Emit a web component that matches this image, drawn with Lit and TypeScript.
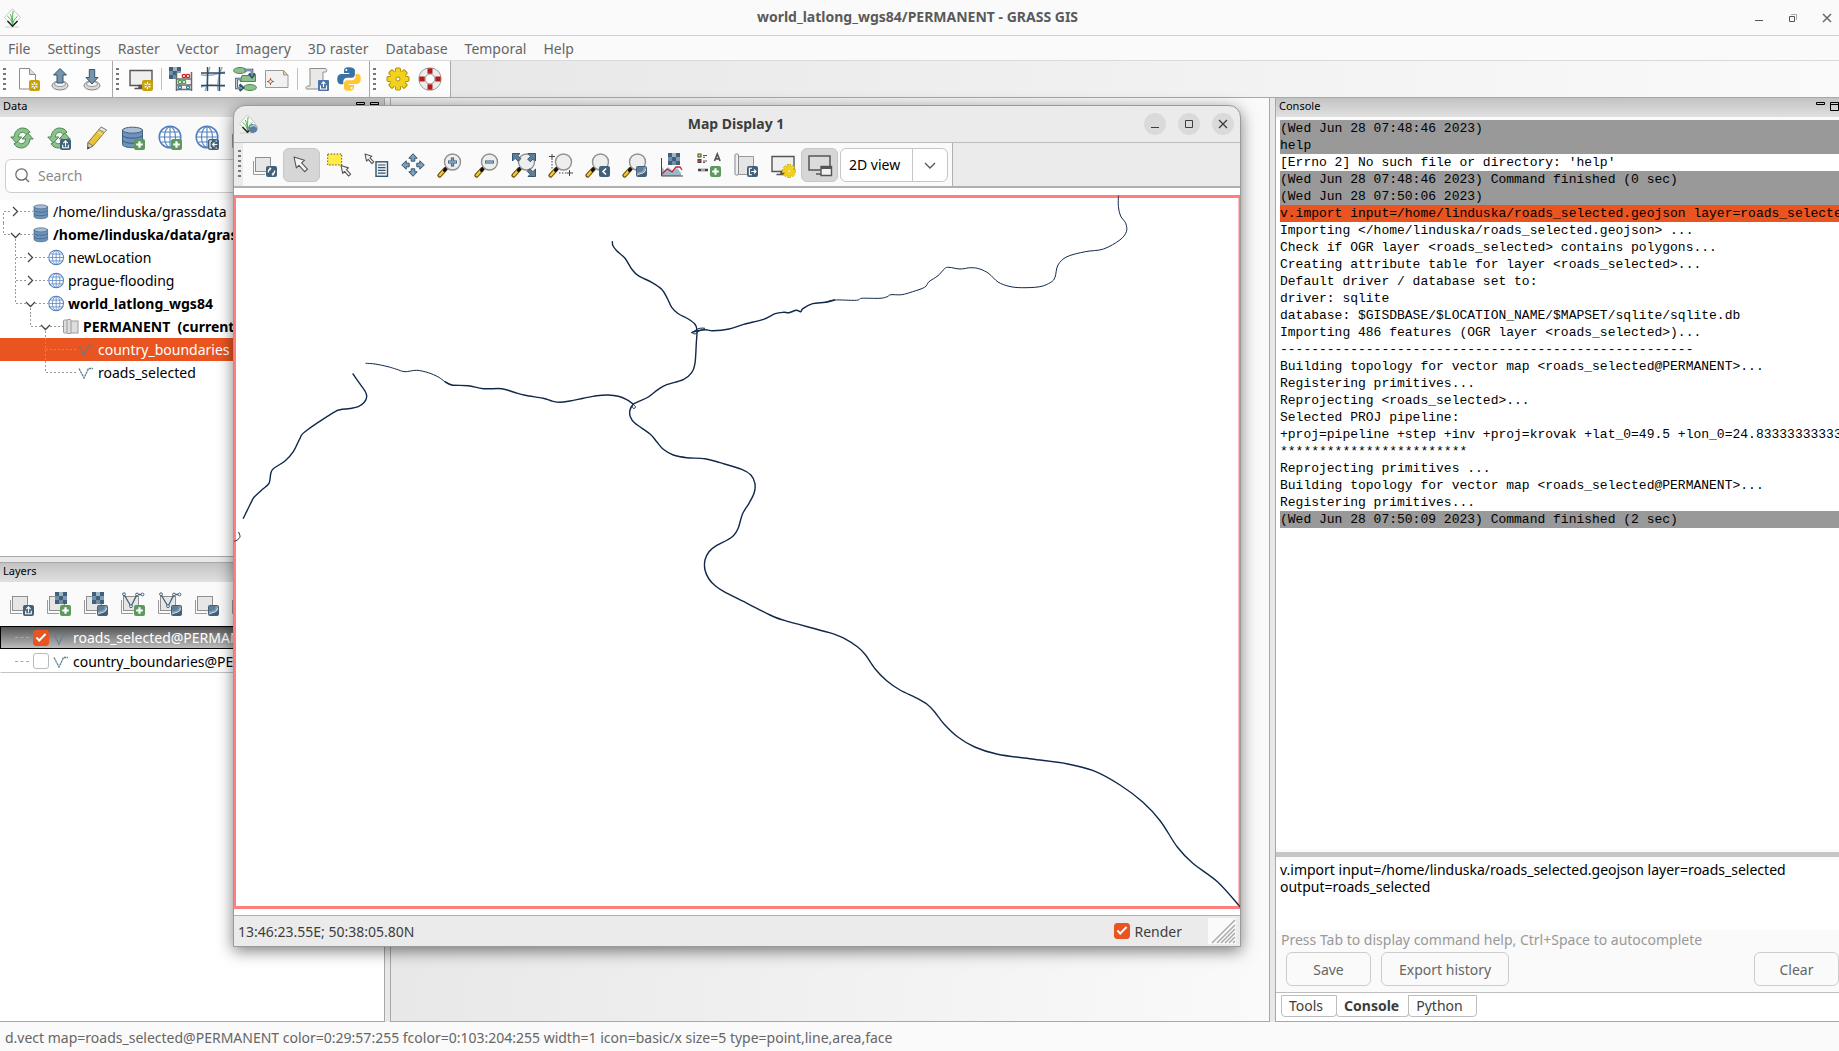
import { LitElement, html, svg, css, nothing } from "lit";
import { customElement } from "lit/decorators.js";
import { classMap } from "lit/directives/class-map.js";

type Pt = [number, number];

/* ---------- shared icon parts ---------- */

const badge = (fill: string, x = 13, y = 13) =>
  svg`<rect x=${x} y=${y} width="11" height="11" rx="2" fill=${fill} />`;
const plusBadge = svg`${badge("#5b9a5b")}<path d="M18.5 15.2v6.6M15.2 18.5h6.6" stroke="#fff" stroke-width="2.2" />`;
const uploadBadge = svg`${badge("#43607a")}<path d="M18.5 20.5v-5.2M16.3 17.2l2.2-2.3 2.2 2.3M15.7 18.8v2.9h5.6v-2.9" stroke="#fff" stroke-width="1.1" fill="none" />`;
const importBadge = svg`${badge("#43607a")}<path d="M17 15h-2v7h2M22 15h-1.5M22 22h-1.5M17.5 18.5h4.8M19.6 16.5l-2 2 2 2" stroke="#fff" stroke-width="1.1" fill="none" />`;
const exportBadge = svg`${badge("#43607a")}<path d="M18 15.3h-2.6v6.4H18M17.2 18.5h4.8M20 16.5l2 2-2 2" stroke="#fff" stroke-width="1.1" fill="none" />`;
const moonBadge = svg`${badge("#43607a")}<path d="M14 14h9v2.500c0 3-2.500 4-4.500 4.200-1.800.3-3 1.300-4.500 1.300z" fill="#7f9bb0" /><path d="M14 14h6.500c.5 3-1.500 5-6.500 5z" fill="#5f7f98" /><path d="M22.500 16c-.3 3-2.500 4.300-4.500 4.500-1.600.2-2.600 1.200-3.800 1.500" stroke="#d5dfe7" fill="none" />`;
const backBadge = svg`${badge("#43607a")}<path d="M20 15.500l-3 3 3 3" stroke="#fff" stroke-width="1.600" fill="none" />`;
const swirlBadge = svg`${badge("#43607a")}<path d="M15.500 19.500c-.5-2 .6-4 2.700-4M16.900 14.500v3M21.500 17.500c.5 2-.6 4-2.700 4M20.100 22.500v-3" stroke="#fff" stroke-width="1.300" fill="none" />`;
const starBadge = svg`${badge("#c9a20a")}<path d="M18.500 15v7M15.500 16.700l6 3.600M21.500 16.700l-6 3.600" stroke="#fff" stroke-width="1.300" /><circle cx="18.500" cy="18.500" r="1.200" fill="#c9a20a" />`;

const sheets = svg`<path d="M.5 8v13.500H12" stroke="#999" fill="none" /><rect x="2.500" y="4.500" width="15" height="14" fill="#e6e6e6" stroke="#8f8f8f" />`;
const checker = (x: number, y: number) => svg`
  <rect x=${x} y=${y} width="12" height="12" fill="#43607a" />
  <rect x=${x + 4} y=${y} width="4" height="4" fill="#9db7cb" />
  <rect x=${x + 8} y=${y + 4} width="4" height="4" fill="#7d9cb5" />
  <rect x=${x} y=${y + 4} width="4" height="4" fill="#6f8ea8" />
  <rect x=${x + 4} y=${y + 8} width="4" height="4" fill="#6f8ea8" />`;
const vee = svg`<path d="M3 2.500l7 12 6-12h5" stroke="#43607a" stroke-width="1.300" fill="none" />
  <g fill="#fff" stroke="#43607a"><circle cx="3" cy="2.200" r="1.400" /><circle cx="10" cy="14.200" r="1.400" /><circle cx="16" cy="2.500" r="1.400" /><circle cx="21.500" cy="2.500" r="1.400" /></g>`;
const globe = svg`<circle cx="12" cy="11" r="10.800" fill="#fff" stroke="#4f80bd" stroke-width="1.500" />
  <path d="M12 1v20M2 11h20M3.500 6h17M3.500 16h17" stroke="#4f80bd" stroke-width="1.100" />
  <ellipse cx="12" cy="11" rx="5.500" ry="10.300" fill="none" stroke="#4f80bd" stroke-width="1.100" />`;
const database = svg`<path d="M1.500 4v14.500c0 1.800 4.500 3.200 10 3.200s10-1.400 10-3.200V4z" fill="#6d92bd" stroke="#43607a" />
  <path d="M1.500 9c0 1.700 4.500 3.200 10 3.200s10-1.500 10-3.200M1.500 14c0 1.700 4.500 3.200 10 3.200s10-1.500 10-3.200" fill="none" stroke="#3b5875" />
  <ellipse cx="11.500" cy="4.200" rx="10" ry="3" fill="#a9bfd8" stroke="#43607a" />`;
const refreshHalf = svg`<path d="M.8 11H4c.3-5 4-9 8.500-9 3.500 0 6 1.700 7.500 4.200l-4 2.300C15 7 14 6.300 12.500 6.300 10 6.300 8.400 8.500 8.300 11h3.500l-5.500 6z" fill="#8cc08c" stroke="#4c8a50" stroke-linejoin="round" />`;
const refresh = svg`${refreshHalf}<g transform="rotate(180 12 12)">${refreshHalf}</g>`;
const arrow = (x: number, y: number, s: number) =>
  svg`<path transform="translate(${x} ${y}) scale(${s})" d="M0 0l2.500 11.500 2.700-2.700 6 6.700 3-2.800-6.200-6.500L11 3.500z" fill="#f4f4f4" stroke="#555" stroke-width=${1.1 / s} stroke-linejoin="round" />`;
const lens = svg`<path d="M1.500 22.500l6-6.500" stroke="#6b5200" stroke-width="4.400" stroke-linecap="round" />
  <path d="M1.800 22.200l4-4.400" stroke="#f2c73a" stroke-width="2.400" stroke-linecap="round" />
  <path d="M6.500 17.300l1.800-2" stroke="#111" stroke-width="3.200" stroke-linecap="round" />
  <circle cx="14.500" cy="9" r="8" fill="#eeeeee" stroke="#909090" stroke-width="1.400" />`;
const screen = svg`<path d="M1 3.500h22v15H1z" fill="#efefef" stroke="#555" stroke-width="1.400" /><path d="M10 18.500h4v2.500h-4zM5.500 21.500h13" stroke="#555" stroke-width="1.500" fill="#555" />`;
const blueArrow = (angle: number) =>
  svg`<path transform="rotate(${angle} 12 12)" d="M12 .7l4.200 4.500h-2.400v3h-3.600v-3H7.800z" fill="#7f9fb8" stroke="#34556f" />`;

const gearPath = Array.from({ length: 8 }, (_, i) => i * 45);

const icons: Record<string, unknown> = {
  newDoc: svg`<path d="M3.500 1.500h10l6 6v14.500h-16z" fill="#fff" stroke="#8c8c8c" /><path d="M13.500 1.500v6h6" fill="#ddd" stroke="#8c8c8c" />${starBadge}`,
  open: svg`<ellipse cx="12" cy="18.500" rx="8" ry="4.500" fill="#d9d9d9" stroke="#888" /><ellipse cx="12" cy="17" rx="5.500" ry="2.500" fill="#f5f5f5" stroke="#999" />
    <path d="M12 1.500l6.500 6.500h-3.500v8H9V8H5.500z" fill="#7594ad" stroke="#34556f" />`,
  save: svg`<ellipse cx="12" cy="18.500" rx="8" ry="4.500" fill="#d9d9d9" stroke="#888" /><ellipse cx="12" cy="17" rx="5.500" ry="2.500" fill="#f5f5f5" stroke="#999" />
    <path d="M12 17l6-6.500h-3.300V2.500H9.300v8H6z" fill="#7594ad" stroke="#34556f" />`,
  newDisplay: svg`${screen}${starBadge}`,
  calc: svg`${checker(0, 0)}<rect x="7" y="6" width="16" height="18" fill="#f6f6f6" /><path d="M7.500 5v19M22.500 5v19M7 12h16M7 18h16M7 22.500h16" stroke="#6b6b6b" stroke-width="1.500" />
    <g fill="#fff" stroke-width="1.300"><g stroke="#c22"><circle cx="15" cy="9" r="1.700" /><circle cx="19" cy="9" r="1.700" /></g><g stroke="#4c9a50"><circle cx="11" cy="15" r="1.700" /><circle cx="15" cy="15" r="1.700" /></g><g stroke="#34708f"><circle cx="11" cy="20.300" r="1.500" /><circle cx="19" cy="20.300" r="1.500" /></g></g>`,
  rectify: svg`<path d="M0 7.500c8 3 16-1 24-2.500M0 20c8-4 16-1 24-1M9 0C5 8 8 16 4 24M21 0c-3 8-5 16-4 24" stroke="#8fb0cc" stroke-width="1.600" fill="none" />
    <path d="M0 6h24M0 18.500h24M6.500 0v24M18.500 0v24" stroke="#3d4a54" stroke-width="1.400" />`,
  model: svg`<ellipse cx="7" cy="3.500" rx="6.500" ry="3" fill="#8cc08c" stroke="#4c8a50" /><path d="M9 8.500h13.500v6H7z" fill="#8cc08c" stroke="#4c8a50" /><ellipse cx="17" cy="20.500" rx="6.500" ry="3" fill="#8cc08c" stroke="#4c8a50" />
    <path d="M11 3h8v6M16 6.500l3 3.500 3-3.500M9 12H3.500v9H9M6.500 17.500l3.500 3.300-3.500 3" stroke="#34556f" stroke-width="2.600" fill="none" /><path d="M11 3h8v6M9 12H3.500v9H9" stroke="#bcd" fill="none" />`,
  layout: svg`<path d="M.5 3.500h18l4.500 4.500v12.500H.5z" fill="#f1f1f1" stroke="#999" /><path d="M18.500 3.500v4.500h4.500z" fill="#f0c9a0" stroke="#999" /><path d="M5.500 11v7M2 14.500h7" stroke="#a0522d" /><circle cx="5.500" cy="14.500" r="1.700" fill="#fff" stroke="#a0522d" />`,
  script: svg`<path d="M5 1.500h15c2 0 2.500 3.500.5 3.500H18v17H2c-2 0-1-3 1-3h2V4C5 2.500 4 1.500 5 1.500z" fill="#e9e9e7" stroke="#8d8d86" /><rect x="13" y="13" width="11" height="11" rx="1" fill="#4c72a8" /><path d="M18.500 20v-4.500M16.500 17l2-2.200 2 2.200M15.500 18.500v3.500h6v-3.500" stroke="#fff" stroke-width="1.100" fill="none" />`,
  python: svg`<path d="M11.900.2C7.500.2 7 2.100 7 3.500V6h5.200v1H4.500C2 7 .2 8.900.2 12.300c0 3.200 1.600 5 3.700 5h2.400v-2.800c0-2 1.700-3.700 3.800-3.700h4.800c1.700 0 3-1.400 3-3.200V3.500C17.900 1.500 16 .2 11.900.2z" fill="#3a72a6" /><circle cx="9.300" cy="3" r="1.100" fill="#fff" />
    <path d="M12.100 23.800c4.400 0 4.900-1.900 4.900-3.300V18h-5.200v-1h7.700c2.500 0 4.300-1.900 4.300-5.300 0-3.200-1.600-5-3.700-5h-1.500v2.800c0 2-1.700 3.700-3.800 3.700H10c-1.700 0-3 1.400-3 3.200v4.100c0 2 1 3.300 5.100 3.300z" fill="#ffc733" /><circle cx="14.700" cy="21" r="1.100" fill="#fff" />`,
  gear: svg`<g fill="#f2d21c" stroke="#b08e00">${gearPath.map(a => svg`<rect x="9.500" y="1" width="5" height="6" rx="1" transform="rotate(${a} 12 12)" />`)}</g><circle cx="12" cy="12" r="8" fill="#f2d21c" /><circle cx="12" cy="12" r="2" fill="#fff" stroke="#b08e00" />`,
  buoy: svg`<circle cx="12" cy="12" r="8" fill="none" stroke="#8a8a8a" stroke-width="7" /><circle cx="12" cy="12" r="8" fill="none" stroke="#ececec" stroke-width="5.600" /><g fill="#b81a1a"><rect x="9.500" y="1.300" width="5" height="5.400" /><rect x="9.500" y="17.300" width="5" height="5.400" /><rect x="1.300" y="9.500" width="5.400" height="5" /><rect x="17.300" y="9.500" width="5.400" height="5" /></g>`,
  refresh,
  refreshUp: svg`${refresh}${uploadBadge}`,
  pencil: svg`<path d="M17 1l5.500 3L9 20l-5.500 3L4 16.500z" fill="#e8c43a" stroke="#8a7a3a" /><path d="M17 1l5.500 3-2 2.500-5.600-3z" fill="#e6e6e6" stroke="#8c8c8c" /><path d="M4 16.500l5 3.500-5.500 3z" fill="#dcc9a8" stroke="#777" /><path d="M3.500 23l.2-2.500 1.900 1.300z" fill="#333" /><path d="M14 6l4.500 3" stroke="#fff3a0" />`,
  dbAdd: svg`${database}${plusBadge}`,
  globeAdd: svg`${globe}${plusBadge}`,
  globeImport: svg`${globe}${importBadge}`,
  download: svg`${sheets}${importBadge}`,
  layerLoad: svg`${sheets}${uploadBadge}`,
  rasterAdd: svg`${sheets}${checker(8, 0)}${plusBadge}`,
  rasterMisc: svg`${sheets}${checker(8, 0)}${moonBadge}`,
  vectorAdd: svg`${sheets}${vee}${plusBadge}`,
  vectorMisc: svg`${sheets}${vee}${moonBadge}`,
  overlay: svg`${sheets}${moonBadge}`,
  render: svg`${sheets}${swirlBadge}`,
  pointer: arrow(4, 4, 0.95),
  select: svg`<rect x=".7" y="1" width="14" height="11" fill="#ffec4a" stroke="#555" stroke-dasharray="1.500 1.500" />${arrow(14, 12.500, 0.68)}`,
  query: svg`${arrow(1, 1, 0.62)}<rect x="12" y="8.800" width="11.500" height="14.500" fill="#eef3f7" stroke="#34556f" stroke-width="1.400" /><path d="M14 12h7.500M14 14.700h7.500M14 17.400h7.500M14 20.100h7.500" stroke="#34556f" stroke-width="1.200" />`,
  pan: svg`${[0, 90, 180, 270].map(blueArrow)}`,
  zoomIn: svg`${lens}<path d="M14.500 4.500v9M10 9h9" stroke="#34556f" stroke-width="3.200" /><path d="M14.500 5.200v7.600M10.700 9h7.600" stroke="#7f9fb8" stroke-width="1.800" />`,
  zoomOut: svg`${lens}<path d="M10 9h9" stroke="#34556f" stroke-width="3.200" /><path d="M10.700 9h7.600" stroke="#7f9fb8" stroke-width="1.800" />`,
  zoomExtent: svg`${lens}<g fill="#5d7f9a" stroke="#34556f"><path d="M.5.500H8L5.800 2.700l3 3-2.600 2.600-3-3L.5 8z" /><path d="M23.500.500V8l-2.200-2.200-3 3-2.600-2.600 3-3L16 .500z" /><path d="M23.500 23.500H16l2.200-2.200-3-3 2.600-2.600 3 3 2.700-2.700z" /></g>`,
  zoomRegion: svg`${lens}<path d="M3 1v6M0 3.500h6M20.500 17v6M18 20h6" stroke="#444" /><path d="M3 8v8M10 20h8" stroke="#444" stroke-dasharray="1.500 1.500" />`,
  zoomBack: svg`${lens}${backBadge}`,
  zoomMore: svg`${lens}${moonBadge}`,
  analyze: svg`${checker(8, 0)}<path d="M2 23v-9l3 4 3-4 5 4 4-3 4 5v3z" fill="#9db7cb" /><path d="M1.500 5v18H23" stroke="#444" fill="none" /><path d="M2 21l5-5 5 3 4-5h4l2 3" stroke="#c22" stroke-width="1.300" fill="none" />`,
  legend: svg`<rect x="1" y="1" width="3" height="3" fill="#ffe600" stroke="#444" /><rect x="1" y="6.500" width="3" height="3" fill="#d33" stroke="#444" /><path d="M6 2.500h4M6 4.300h2M6 8h4M6 9.500h2" stroke="#555" /><path d="M17.500 8l2.800-7 2.800 7M18.300 5.800h4" stroke="#555" stroke-width="1.700" fill="none" /><path d="M1 17h10" stroke="#444" stroke-width="2.600" /><path d="M4 17h4" stroke="#fff" />${plusBadge}`,
  saveMap: svg`<path d="M4 3.500h15.500v18H4z" fill="#e4e4e4" stroke="#999" /><path d="M1 2c0-1.500 3.500-1.500 3.500 0v19c0 1.500-3.500 1.500-3.500 0z" fill="#f0f0f0" stroke="#888" />${exportBadge}`,
  displaySettings: svg`${screen}<g transform="translate(11.500 11.500) scale(.55)" fill="#f2d21c" stroke="#d1ad00">${gearPath.map(a => svg`<rect x="9" y="0" width="6" height="7" transform="rotate(${a} 12 12)" />`)}<circle cx="12" cy="12" r="8" stroke="none" /><circle cx="12" cy="12" r="2.500" fill="#fff" /></g>`,
  displayWindow: svg`<path d="M1 3h21v14H1z" fill="#dcdcdc" stroke="#555" stroke-width="1.500" /><path d="M8 21h6" stroke="#555" stroke-width="1.500" /><path d="M13 13.500h10.500v9H13z" fill="#f2f2f2" stroke="#555" stroke-width="1.400" /><path d="M13 15h10.500" stroke="#555" stroke-width="2" />`,
};

const icon = (name: string) => html`<svg class="icon" viewBox="0 0 24 24" aria-hidden="true">${icons[name]}</svg>`;

const grassLogo = (withGlobe = false) => html`<svg class="logo" viewBox="0 0 20 20" aria-hidden="true">
  <path d="M2 19h14" stroke="#ccc" />
  <path d="M9.500 .8l8 8.700-8 8.500-8-8.500z" fill="#fbfcfb" stroke="#c4c4c4" />
  <path d="M4.500 13l5 5.200 5-5.200" stroke="#222" stroke-width="1.600" fill="none" />
  <path d="M9.500 17c0-5 0-10 .6-14M9.500 17C9 12.500 7 10 4.500 8.500M9.500 17c.8-4 2.500-7 5-8.500M9.200 14C8.800 10 8.200 8 7.200 6" stroke="#4fb04f" stroke-width="1" fill="none" />
  ${withGlobe ? svg`<circle cx="15" cy="14.500" r="4.500" fill="#5f7f9f" /><path d="M12 13c2-2 3-1 4-2 1 1.500 2 1 3 2" stroke="#b8cad9" fill="none" stroke-width="1.300" />` : nothing}
</svg>`;

/* ---------- roads on the map canvas, in screen units ---------- */

const roads: { pts: Pt[]; thin?: boolean }[] = [
  { thin: true, pts: [[366, 363.300], [375, 364], [388, 366.700], [396.700, 369.300], [405, 371.700], [416.700, 370.300], [428.300, 372.700], [438.300, 377], [445, 381.700], [451.700, 385]] },
  { pts: [[445, 381.700], [451.700, 385], [468.300, 385.700], [483.300, 388.700], [501.700, 388.700], [513.300, 392], [525, 395.300], [543.300, 398.300], [551.700, 401], [560, 402.300], [570, 401], [583.300, 398.300], [596.700, 395.700], [608.300, 395], [618.300, 396.300], [626.700, 399.700], [633, 404]] },
  { pts: [[353, 374], [358.300, 381.700], [365, 391], [366.700, 396.700], [364.300, 402.300], [358.300, 406.700], [350, 408.500], [340, 409.700], [333.300, 412.700], [305, 431.700], [300, 438.300], [293.300, 451.700], [285, 461], [273.300, 468.700], [270.700, 474], [269, 483.300], [261.700, 490], [254, 497.300], [250.700, 503.300], [243.300, 518.300]] },
  { thin: true, pts: [[238.700, 532.300], [240, 536.700], [237.300, 540], [234, 541.300]] },
  {
    pts: [[612.300, 241.700], [613, 245.700], [616.700, 250.700], [625, 258.300], [631.700, 269], [638.300, 275.700], [651.700, 282.300], [661.700, 289.300], [667.300, 298.300], [671.700, 307.300], [678.300, 313.700], [688.300, 319], [695, 324.300], [697, 330], [696.300, 343.300], [695, 363.300], [691.700, 372.700], [683.300, 379.700], [666.700, 384.700], [658.300, 389.300], [648.300, 397], [638.300, 401.700], [633.300, 404.300], [630, 410], [630.300, 416.700], [635, 423.300], [650, 434], [656.700, 441.700], [663.300, 449.300], [673.300, 455], [686.700, 457.700], [705, 458.700], [720, 462.700], [741.800, 469.300], [750.900, 475], [754.900, 483.300], [754.200, 492.700], [749, 503.300], [742.500, 514], [738.200, 528.300], [733.400, 535.700], [727.300, 540], [716.300, 545.700], [709, 551.700], [705, 560], [705, 570], [709, 579], [715, 585.500], [724, 591.700], [747, 603.300], [770, 615], [785.200, 620.700], [829.300, 632.700], [844.600, 638.700], [858, 647.300], [865.600, 655], [875.200, 669], [886.700, 680.700], [900, 690], [917.300, 698.300], [926.800, 704], [934.500, 711.700], [944, 724], [957.500, 736.700], [974.700, 747], [997.600, 754.300], [1032, 759], [1066.500, 763.700], [1093.300, 770.700], [1120, 785], [1143, 802.300], [1160.300, 821], [1177.500, 847.300], [1192.800, 863.300], [1217.700, 882], [1240, 906.700]],
  },
  { pts: [[692, 332.500], [696.700, 331], [705.400, 329.700], [712.700, 330.700], [729, 329], [743.600, 324.300], [763.600, 319.300], [775.200, 313.700], [783.600, 312.300], [789, 312.700], [796.300, 310.300], [800.700, 311.700], [802.900, 308.700], [812.700, 303.700], [825.400, 302.300], [834.500, 300]] },
  {
    thin: true,
    pts: [[825.400, 302.300], [834.500, 300], [856.300, 300.300], [861.800, 298.300], [880, 298.300], [887.200, 296.700], [890.800, 294.700], [901.700, 294.700], [912.600, 291.700], [924.600, 287.300], [929, 281.700], [938, 275.700], [944.600, 268.700], [949, 267.300], [960, 269], [970.800, 267.700], [979.900, 269], [989, 273.700], [998, 282], [1009, 286.300], [1021.700, 287.700], [1039.900, 286.700], [1050.800, 282.300], [1055, 277.300], [1058, 265], [1067, 256.700], [1085.300, 251.700], [1103.500, 249], [1119.800, 240], [1126.400, 231.700], [1125.700, 223.300], [1120.600, 216], [1118.400, 206.700], [1118.400, 196]],
  },
  { thin: true, pts: [[692, 332.500], [695, 334], [699, 331], [705, 328.500], [699, 328.500], [692, 332.500]] },
  { thin: true, pts: [[633, 404], [635.500, 407], [633.500, 408.500], [632, 406]] },
];

/** Catmull-Rom spline through the points, written as cubic Béziers. */
function smooth(p: Pt[]): string {
  let d = `M${p[0][0]} ${p[0][1]}`;
  for (let i = 0; i < p.length - 1; i++) {
    const a = p[i - 1] ?? p[i], b = p[i], c = p[i + 1], e = p[i + 2] ?? c;
    d += `C${b[0] + (c[0] - a[0]) / 6} ${b[1] + (c[1] - a[1]) / 6} ${c[0] - (e[0] - b[0]) / 6} ${c[1] - (e[1] - b[1]) / 6} ${c[0]} ${c[1]}`;
  }
  return d;
}

/* ---------- content ---------- */

const menus = ["File", "Settings", "Raster", "Vector", "Imagery", "3D raster", "Database", "Temporal", "Help"];

const mainBars: string[][] = [
  ["newDoc", "open", "save"],
  ["newDisplay", "|", "calc", "rectify", "model", "layout", "|", "script", "python"],
  ["gear", "buoy"],
];

const names: Record<string, string> = {
  newDoc: "New workspace", open: "Open workspace", save: "Save workspace", newDisplay: "New map display",
  calc: "Raster calculator", rectify: "Georectifier", model: "Graphical modeler", layout: "Cartographic composer",
  script: "Run script", python: "Python editor", gear: "Preferences", buoy: "Manual",
};

const mapTools = ["render", "pointer", "select", "query", "pan", "zoomIn", "zoomOut", "zoomExtent", "zoomRegion", "zoomBack", "zoomMore", "analyze", "legend", "saveMap", "displaySettings", "displayWindow"];

const treeDb = (x: number) => svg`<g transform="translate(${x} 4) scale(.68)">${database}</g>`;
const treeGlobe = (x: number) => svg`<g transform="translate(${x} 4) scale(.68)">${globe}</g>`;
const treeVector = (x: number) => svg`<path transform="translate(${x} 6)" d="M1 1.500L6 11l4.500-9.500H15" stroke="#5a7d97" stroke-width="1.300" stroke-dasharray="2.500 .6" fill="none" />`;
const treeMapset = (x: number) => svg`<g transform="translate(${x} 4)" fill="#dedede" stroke="#9a9a9a"><rect x="6" y="2" width="9" height="12" /><rect x=".5" y="1" width="4" height="13" rx="1" /><rect x="4" y=".5" width="4" height="14" rx="1" /></g>`;
const right = (x: number) => svg`<path d="M${x - 2} 7l4.500 4.500-4.500 4.500" class="chev" />`;
const down = (x: number) => svg`<path d="M${x - 5} 10l4.500 4.500 4.500-4.500" class="chev" />`;

interface Row { w: number; lines: string; parts: unknown; text: string; bold?: boolean; selected?: boolean }
const tree: Row[] = [
  { w: 53, lines: "M3.500 23V11.500H12M20 11.500H33", parts: svg`${right(15)}${treeDb(33)}`, text: "/home/linduska/grassdata" },
  { w: 53, lines: "M3.500 0V11.500H12M20 11.500H33M15.500 16V23", parts: svg`${down(16)}${treeDb(33)}`, text: "/home/linduska/data/grassdata", bold: true },
  { w: 68, lines: "M15.500 0V23M16 11.500H27M35 11.500H48", parts: svg`${right(30)}${treeGlobe(48)}`, text: "newLocation" },
  { w: 68, lines: "M15.500 0V23M16 11.500H27M35 11.500H48", parts: svg`${right(30)}${treeGlobe(48)}`, text: "prague-flooding" },
  { w: 68, lines: "M15.500 0V11.500H27M35 11.500H48M30.500 16V23", parts: svg`${down(31)}${treeGlobe(48)}`, text: "world_latlong_wgs84", bold: true },
  { w: 83, lines: "M30.500 0V11.500H41M50 11.500H63M45.500 16V23", parts: svg`${down(46)}${treeMapset(63)}`, text: "PERMANENT  (current)", bold: true },
  { w: 98, lines: "M45.500 0V23M46 11.500H78", parts: treeVector(78), text: "country_boundaries", selected: true },
  { w: 98, lines: "M45.500 0V11.500H78", parts: treeVector(78), text: "roads_selected" },
];

const log: [string, string?][] = [
  ["(Wed Jun 28 07:48:46 2023)", "cmd"],
  ["help", "cmd"],
  ["[Errno 2] No such file or directory: 'help'"],
  ["(Wed Jun 28 07:48:46 2023) Command finished (0 sec)", "cmd"],
  ["(Wed Jun 28 07:50:06 2023)", "cmd"],
  ["v.import input=/home/linduska/roads_selected.geojson layer=roads_selected output=roads_selected", "hot"],
  ["Importing </home/linduska/roads_selected.geojson> ..."],
  ["Check if OGR layer <roads_selected> contains polygons..."],
  ["Creating attribute table for layer <roads_selected>..."],
  ["Default driver / database set to:"],
  ["driver: sqlite"],
  ["database: $GISDBASE/$LOCATION_NAME/$MAPSET/sqlite/sqlite.db"],
  ["Importing 486 features (OGR layer <roads_selected>)..."],
  ["-".repeat(53)],
  ["Building topology for vector map <roads_selected@PERMANENT>..."],
  ["Registering primitives..."],
  ["Reprojecting <roads_selected>..."],
  ["Selected PROJ pipeline:"],
  ["+proj=pipeline +step +inv +proj=krovak +lat_0=49.5 +lon_0=24.8333333333333"],
  ["*".repeat(24)],
  ["Reprojecting primitives ..."],
  ["Building topology for vector map <roads_selected@PERMANENT>..."],
  ["Registering primitives..."],
  ["(Wed Jun 28 07:50:09 2023) Command finished (2 sec)", "cmd"],
];

const base = css`
  :host { box-sizing: border-box; font-family: "Noto Sans", "Open Sans", sans-serif; font-size: 14px; line-height: 17px; color: #3d3d3d; }
  *, *::before, *::after { box-sizing: border-box; }
  button, input, select, textarea { font: inherit; color: inherit; margin: 0; }
  .icon { width: 24px; height: 24px; display: block; overflow: visible; }
  .logo { width: 20px; height: 20px; display: block; flex: none; }
  .tool { display: grid; place-items: center; flex: none; border: 1px solid transparent; border-radius: 6px; background: none; padding: 0; }
  .check { appearance: none; width: 16px; height: 16px; flex: none; border: 1px solid #b9b9b9; border-radius: 3px; background: #fff; display: grid; place-items: center; }
  .check:checked { background: #e95420; border-color: #e95420; }
  .check:checked::after { content: ""; width: 10px; height: 5px; border: solid #fff; border-width: 0 0 2px 2px; transform: rotate(-45deg); margin-bottom: 3px; }
  .grip { flex: none; width: 3px; align-self: stretch; margin-block: 7px; background: repeating-linear-gradient(#777 0 2px, transparent 2px 5px); }
`;

/* ---------- floating map window ---------- */

@customElement("map-display")
export class MapDisplay extends LitElement {
  static styles = [base, css`
    :host { display: flex; flex-direction: column; background: #ebebeb; border: 1px solid #9a9a9a; border-radius: 12px 12px 0 0; box-shadow: 0 4px 16px rgba(0, 0, 0, 0.5); overflow: hidden; }
    .title { display: grid; grid-template-columns: 1fr auto 1fr; align-items: center; height: 37px; padding: 0 6px 0 4px; border-bottom: 1px solid #bdbdbd; flex: none; }
    h2 { margin: 0; font-size: 14px; font-weight: 700; padding-bottom: 2px; }
    .winbtns { display: flex; justify-content: flex-end; gap: 12px; }
    .winbtn { width: 22px; height: 22px; border: 0; border-radius: 50%; background: #dadada; padding: 0; display: grid; place-items: center; }
    .winbtns svg { width: 10px; height: 10px; display: block; }
    .bar { display: flex; border-bottom: 2px solid #b0b0b0; height: 45px; flex: none; background: #ebebeb; }
    .tools { display: flex; align-items: center; background: #fafafa; border-right: 1px solid #b0b0b0; padding-right: 4px; }
    .handle { background: #ebebeb; align-self: stretch; display: flex; padding-left: 4px; width: 9px; margin-right: 3px; }
    .tool { width: 37px; height: 34px; }
    .tool.on { background: #d6d6d6; border-color: #c6c6c6; }
    .combo { display: grid; width: 108px; height: 34px; margin-left: 2px; }
    .combo select { grid-area: 1 / 1; appearance: none; border: 1px solid #c6c6c6; border-radius: 6px; background: #fff; color: #000; padding: 0 8px; }
    .combo svg { grid-area: 1 / 1; justify-self: end; width: 36px; height: 34px; pointer-events: none; }
    .canvas { flex: 1; min-height: 0; background: #fff; border-bottom: 1px solid #b0b0b0; }
    .canvas svg { display: block; width: 100%; height: 100%; }
    .status { display: flex; align-items: center; height: 30px; flex: none; padding-left: 4px; }
    .render { margin-left: auto; display: flex; align-items: center; gap: 4px; margin-right: 26px; }
    .sizer { width: 28px; height: 26px; background: #fafafa; margin-right: 4px; }
  `];

  render() {
    return html`
      <header class="title">
        ${grassLogo(true)}
        <h2>Map Display 1</h2>
        <div class="winbtns">
          <button class="winbtn" aria-label="Minimize"><svg viewBox="0 0 10 10"><path d="M1 8.500h8" stroke="#3d3d3d" /></svg></button>
          <button class="winbtn" aria-label="Maximize"><svg viewBox="0 0 10 10"><path d="M1.500 1.500h7v7h-7z" stroke="#3d3d3d" fill="none" /></svg></button>
          <button class="winbtn" aria-label="Close"><svg viewBox="0 0 10 10"><path d="M1 1l8 8M9 1l-8 8" stroke="#3d3d3d" stroke-width="1.300" /></svg></button>
        </div>
      </header>
      <div class="bar">
        <div class="tools" role="toolbar">
          <div class="handle"><span class="grip"></span></div>
          ${mapTools.map(t => html`<button class=${classMap({ tool: true, on: t === "pointer" || t === "displayWindow" })} aria-label=${t}>${icon(t)}</button>`)}
          <div class="combo">
            <select aria-label="View mode"><option>2D view</option></select>
            <svg viewBox="0 0 36 34"><path d="M.5 1v32" stroke="#c6c6c6" /><path d="M13 15l5 5 5-5" stroke="#555" stroke-width="1.300" fill="none" /></svg>
          </div>
        </div>
      </div>
      <div class="canvas">
        <svg viewBox="234 188 1006 727" preserveAspectRatio="none" role="img" aria-label="Map canvas">
          <g fill="none" stroke="#10294a" stroke-linecap="round">
            ${roads.map(r => svg`<path d=${smooth(r.pts)} stroke-width=${r.thin ? 1 : 1.4} />`)}
          </g>
          <path d="M234 196.500H1240M234 907.500H1240" stroke="#ff0000" stroke-opacity=".5" stroke-width="3" />
          <path d="M235 198V906M1239.500 198V906" stroke="#ff0000" stroke-opacity=".5" stroke-width="2" />
        </svg>
      </div>
      <footer class="status">
        <span>13:46:23.55E; 50:38:05.80N</span>
        <label class="render"><input class="check" type="checkbox" checked />Render</label>
        <svg class="sizer" viewBox="0 0 28 26" aria-hidden="true"><path d="M4 25L27 2M9 25L27 7M13 25L27 11M17 25L27 15M21 25L27 19M25 25l2-2" stroke="#aaa" stroke-width="1.500" /></svg>
      </footer>`;
  }
}

/* ---------- main window ---------- */

@customElement("app-root")
export class AppRoot extends LitElement {
  static styles = [base, css`
    :host { display: flex; flex-direction: column; height: 100vh; position: relative; overflow: hidden; background: #fafafa; }
    .title { display: grid; grid-template-columns: 1fr auto 1fr; align-items: center; height: 36px; padding: 0 7px 0 3px; border-bottom: 1px solid #d0d0d0; flex: none; }
    h1 { margin: 0; font-size: 14px; font-weight: 700; color: #5a5a5a; padding-bottom: 2px; }
    .winbtns { display: flex; justify-content: flex-end; gap: 24px; }
    .winbtn { border: 0; background: none; padding: 0; width: 10px; height: 10px; }
    .winbtns svg { width: 10px; height: 10px; display: block; }
    .menu { display: flex; align-items: center; gap: 17px; height: 25px; padding: 0 8px; border-bottom: 1px solid #dadada; flex: none; color: #666; }
    .menu button { border: 0; background: none; padding: 0; }
    .bars { display: flex; height: 37px; flex: none; border-bottom: 1px solid #a8a8a8; background: linear-gradient(90deg, #e8e8e8 25%, #fafafa); }
    .group { display: flex; align-items: center; background: #fdfdfd; border-right: 1px solid #a8a8a8; padding: 0 4px 0 3px; }
    .group .grip { margin-right: 6px; }
    .group .tool { width: 32px; height: 32px; }
    .vline { width: 1px; height: 22px; background: #c0c0c0; margin: 0 3px 0 4px; }
    .body { flex: 1; min-height: 0; display: grid; grid-template-columns: 385px 1fr 564px; gap: 5px; background: #e8e8e8; }
    .left, .right { display: flex; flex-direction: column; min-height: 0; min-width: 0; overflow: hidden; }
    .left { border-right: 1px solid #a8a8a8; border-bottom: 1px solid #a8a8a8; background: #fff; }
    .center { border: solid #a8a8a8; border-width: 0 1px 1px; background: linear-gradient(90deg, #e8e8e8, #fafafa); }
    .right { border: solid #a8a8a8; border-width: 0 0 1px 1px; background: #fafafa; }
    .caption { display: flex; justify-content: space-between; height: 19px; flex: none; background: linear-gradient(#c3c3c3, #e0e0e0); color: #000; font-size: 11px; line-height: 16px; padding: 0 0 0 3px; }
    .caption svg { width: 30px; height: 16px; display: block; }
    .inner { padding-right: 5px; }
    .datatools, .layertools { display: flex; align-items: center; background: #fafafa; padding-left: 3px; flex: none; }
    .datatools { height: 42px; }
    .layertools { height: 44px; }
    .datatools .tool, .layertools .tool { width: 37px; height: 34px; }
    .searchwrap { background: #fafafa; padding: 0 5px 7px; flex: none; }
    .search { display: flex; align-items: center; gap: 8px; height: 34px; border: 1px solid #cdcdcd; border-radius: 6px; padding: 0 9px 1px; background: #fff; }
    .search svg { width: 15px; height: 15px; flex: none; }
    .search input { border: 0; outline: 0; padding: 0; flex: 1; min-width: 0; background: none; }
    .search input::placeholder { color: #8a8a8a; }
    .tree { flex: 0 0 356px; color: #000; }
    .row { display: flex; align-items: center; height: 23px; white-space: pre; }
    .row svg { height: 23px; flex: none; }
    .row .chev { stroke: #444; stroke-width: 1.300; fill: none; }
    .row .dash { stroke: #999; stroke-dasharray: 2 2; fill: none; }
    .row.bold { font-weight: 700; }
    .row.selected { background: #e95420; color: #fff; }
    .sash { height: 7px; flex: none; background: #e8e8e8; border: solid #a8a8a8; border-width: 1px 0; }
    .layer { display: flex; align-items: center; height: 24px; padding-left: 14px; gap: 4px; color: #000; border: 1px solid transparent; border-bottom-color: #c4c4c4; white-space: nowrap; flex: none; }
    .layer.selected { height: 23px; border-color: #000; background: linear-gradient(#555, #bdbdbd); color: #fff; }
    .layer svg { width: 16px; height: 22px; flex: none; }
    .lead { width: 14px; border-top: 1px dashed #aaa; }
    .log { flex: 1; min-height: 0; background: #fff; margin-top: 3px; padding-left: 4px; overflow: hidden; color: #000; font-family: "Liberation Mono", monospace; font-size: 13px; }
    .line { white-space: pre; height: 17px; }
    .line.cmd { background: #999; }
    .line.hot { background: #e95420; }
    .split { height: 11px; flex: none; border: solid #fafafa; border-width: 3px 0; background: #c6c6c6; }
    .prompt { height: 70px; flex: none; resize: none; border: 0; outline: 0; padding: 1px 30px 0 4px; background: #fff; color: #000; display: block; overflow: hidden; }
    .hint { margin: 0; padding: 1px 0 0 5px; color: #999; height: 22px; flex: none; }
    .actions { display: flex; gap: 10px; padding: 0 0 6px 10px; flex: none; color: #666; }
    .actions button { height: 34px; min-width: 85px; border: 1px solid #cdcdcd; border-radius: 6px; background: #fafafa; padding: 0 17px; }
    .clear { margin-left: auto; }
    .tabs { display: flex; height: 29px; flex: none; border-top: 1px solid #bdbdbd; padding: 2px 0 0 5px; background: #fff; }
    .tab { height: 22px; border: 1px solid #bdbdbd; border-radius: 0 0 4px 4px; background: #fff; padding: 0 13px 2px 7px; margin-right: -1px; }
    .tab.on { border-top-color: transparent; font-weight: 700; padding: 0 9px 2px 7px; }
    .status { height: 29px; flex: none; display: flex; align-items: center; padding: 2px 5px 0; color: #666; white-space: nowrap; }
    .floating { position: absolute; left: 233px; top: 105px; width: 1008px; height: 842px; }
  `];

  render() {
    const captionButtons = html`<svg viewBox="0 0 30 16" aria-hidden="true"><g fill="none" stroke="#000" stroke-width="1"><path d="M7.500 4.500h8v2h-8zM21.500 4.500h8v8h-8zM21.500 6.500h8" /></g></svg>`;
    return html`
      <header class="title">
        ${grassLogo()}
        <h1>world_latlong_wgs84/PERMANENT - GRASS GIS</h1>
        <div class="winbtns">
          <button class="winbtn" aria-label="Minimize"><svg viewBox="0 0 10 10"><path d="M1 7.500h8" stroke="#555" /></svg></button>
          <button class="winbtn" aria-label="Restore"><svg viewBox="0 0 10 10"><path d="M1.500 3.500h5v5h-5z" stroke="#555" fill="none" /><path d="M3 1.500h5.500V7" stroke="#aaa" fill="none" /></svg></button>
          <button class="winbtn" aria-label="Close"><svg viewBox="0 0 10 10"><path d="M1 1l8 8M9 1l-8 8" stroke="#666" stroke-width="1.500" /></svg></button>
        </div>
      </header>
      <nav class="menu">${menus.map(m => html`<button>${m}</button>`)}</nav>
      <div class="bars">
        ${mainBars.map(bar => html`<div class="group" role="toolbar"><span class="grip"></span>
          ${bar.map(t => t === "|" ? html`<span class="vline"></span>` : html`<button class="tool" aria-label=${names[t]}>${icon(t)}</button>`)}
        </div>`)}
      </div>
      <main class="body">
        <section class="left">
          <div class="caption inner"><span>Data</span>${captionButtons}</div>
          <div class="datatools" role="toolbar">
            ${["refresh", "refreshUp", "pencil", "dbAdd", "globeAdd", "globeImport", "download"].map(t => html`<button class="tool" aria-label=${t}>${icon(t)}</button>`)}
          </div>
          <div class="searchwrap">
            <label class="search">
              <svg viewBox="0 0 15 15" aria-hidden="true"><circle cx="6.500" cy="6.500" r="5.700" fill="none" stroke="#666" stroke-width="1.200" /><path d="M10.500 10.500l3.500 3.500" stroke="#666" stroke-width="1.300" /></svg>
              <input type="text" placeholder="Search" aria-label="Search" />
            </label>
          </div>
          <div class="tree" role="tree">
            ${tree.map(r => html`<div class=${classMap({ row: true, bold: !!r.bold, selected: !!r.selected })} role="treeitem">
              <svg width=${r.w} viewBox="0 0 ${r.w} 23" aria-hidden="true"><path class="dash" d=${r.lines} />${r.parts}</svg><span>${r.text}</span>
            </div>`)}
          </div>
          <div class="sash"></div>
          <div class="caption inner"><span>Layers</span>${captionButtons}</div>
          <div class="layertools" role="toolbar">
            ${["layerLoad", "rasterAdd", "rasterMisc", "vectorAdd", "vectorMisc", "overlay", "render"].map(t => html`<button class="tool" aria-label=${t}>${icon(t)}</button>`)}
          </div>
          ${["roads_selected@PERMANENT", "country_boundaries@PERMANENT"].map((name, i) => html`<div class=${classMap({ layer: true, selected: i === 0 })}>
            <span class="lead"></span>
            <input class="check" type="checkbox" id="layer${i}" ?checked=${i === 0} />
            <svg viewBox="0 0 16 22" aria-hidden="true">${treeVector(0)}</svg>
            <label for="layer${i}">${name}</label>
          </div>`)}
        </section>
        <section class="center"></section>
        <section class="right">
          <div class="caption"><span>Console</span>${captionButtons}</div>
          <div class="log">${log.map(([text, kind]) => html`<div class="line ${kind ?? ""}">${text}</div>`)}</div>
          <div class="split"></div>
          <textarea class="prompt" aria-label="Command prompt" .value=${"v.import input=/home/linduska/roads_selected.geojson layer=roads_selected\noutput=roads_selected"}></textarea>
          <p class="hint">Press Tab to display command help, Ctrl+Space to autocomplete</p>
          <div class="actions"><button>Save</button><button>Export history</button><button class="clear">Clear</button></div>
          <div class="tabs" role="tablist">
            <button class="tab" role="tab">Tools</button><button class="tab on" role="tab">Console</button><button class="tab" role="tab">Python</button>
          </div>
        </section>
      </main>
      <footer class="status">d.vect map=roads_selected@PERMANENT color=0:29:57:255 fcolor=0:103:204:255 width=1 icon=basic/x size=5 type=point,line,area,face</footer>
      <map-display class="floating"></map-display>`;
  }
}
